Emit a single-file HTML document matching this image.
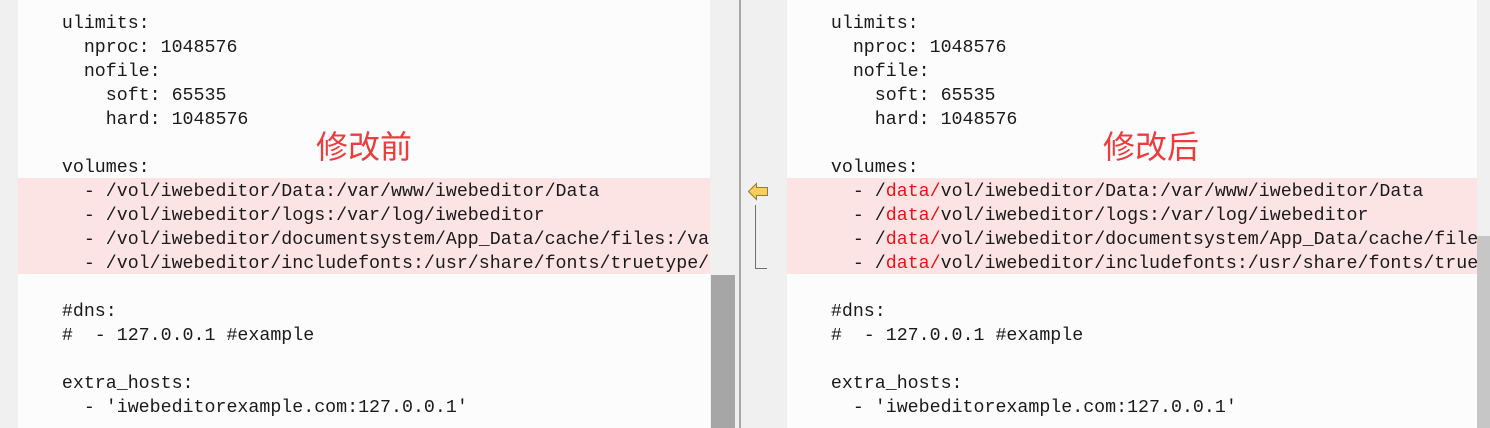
<!DOCTYPE html>
<html><head><meta charset="utf-8"><style>
html,body{margin:0;padding:0;width:1490px;height:428px;overflow:hidden;background:#f0f0f0;position:relative;}
.pane{position:absolute;top:0;height:428px;background:#fcfcfc;overflow:hidden;}
.line{position:absolute;left:0;right:0;height:24px;line-height:28px;font-family:"Liberation Mono",monospace;font-size:18.3px;color:#1a1a1a;white-space:pre;overflow:hidden;}
.hl{background:#fde4e4;}
.r{color:#ee1111;}
.lab{position:absolute;font-family:"Noto Sans CJK SC",sans-serif;font-size:32px;color:#ee3b3b;line-height:36px;}
</style></head><body>
<div class="pane" style="left:18px;width:692px;">
<div class="line" style="top:10px;">    ulimits:</div>
<div class="line" style="top:34px;">      nproc: 1048576</div>
<div class="line" style="top:58px;">      nofile:</div>
<div class="line" style="top:82px;">        soft: 65535</div>
<div class="line" style="top:106px;">        hard: 1048576</div>
<div class="line" style="top:154px;">    volumes:</div>
<div class="line hl" style="top:178px;">      - /vol/iwebeditor/Data:/var/www/iwebeditor/Data</div>
<div class="line hl" style="top:202px;">      - /vol/iwebeditor/logs:/var/log/iwebeditor</div>
<div class="line hl" style="top:226px;">      - /vol/iwebeditor/documentsystem/App_Data/cache/files:/var/www</div>
<div class="line hl" style="top:250px;">      - /vol/iwebeditor/includefonts:/usr/share/fonts/truetype/include</div>
<div class="line" style="top:298px;">    #dns:</div>
<div class="line" style="top:322px;">    #  - 127.0.0.1 #example</div>
<div class="line" style="top:370px;">    extra_hosts:</div>
<div class="line" style="top:394px;">      - 'iwebeditorexample.com:127.0.0.1'</div>
<div class="lab" style="left:298px;top:127px;">修改前</div>
</div>
<div style="position:absolute;left:711px;top:275px;width:24px;height:153px;background:#a6a6a6;"></div>
<div style="position:absolute;left:739px;top:0;width:2px;height:428px;background:#a8a8a8;"></div>
<svg style="position:absolute;left:745px;top:180px" width="30" height="100">
<path d="M3.5 11.5 L11.5 3.5 L11.5 7.5 L22.5 7.5 L22.5 15.5 L11.5 15.5 L11.5 19.5 Z" fill="#f7cf5a" stroke="#9a7a30" stroke-width="1"/>
<path d="M10.5 25 V88.5 H22" fill="none" stroke="#707070" stroke-width="1"/>
</svg>
<div class="pane" style="left:787px;width:690px;">
<div class="line" style="top:10px;">    ulimits:</div>
<div class="line" style="top:34px;">      nproc: 1048576</div>
<div class="line" style="top:58px;">      nofile:</div>
<div class="line" style="top:82px;">        soft: 65535</div>
<div class="line" style="top:106px;">        hard: 1048576</div>
<div class="line" style="top:154px;">    volumes:</div>
<div class="line hl" style="top:178px;">      - /<span class="r">data/</span>vol/iwebeditor/Data:/var/www/iwebeditor/Data</div>
<div class="line hl" style="top:202px;">      - /<span class="r">data/</span>vol/iwebeditor/logs:/var/log/iwebeditor</div>
<div class="line hl" style="top:226px;">      - /<span class="r">data/</span>vol/iwebeditor/documentsystem/App_Data/cache/files:/var</div>
<div class="line hl" style="top:250px;">      - /<span class="r">data/</span>vol/iwebeditor/includefonts:/usr/share/fonts/truetype</div>
<div class="line" style="top:298px;">    #dns:</div>
<div class="line" style="top:322px;">    #  - 127.0.0.1 #example</div>
<div class="line" style="top:370px;">    extra_hosts:</div>
<div class="line" style="top:394px;">      - 'iwebeditorexample.com:127.0.0.1'</div>
<div class="lab" style="left:316px;top:127px;">修改后</div>
</div>
<div style="position:absolute;left:1477px;top:236px;width:13px;height:192px;background:#c6c6c6;"></div>
</body></html>
